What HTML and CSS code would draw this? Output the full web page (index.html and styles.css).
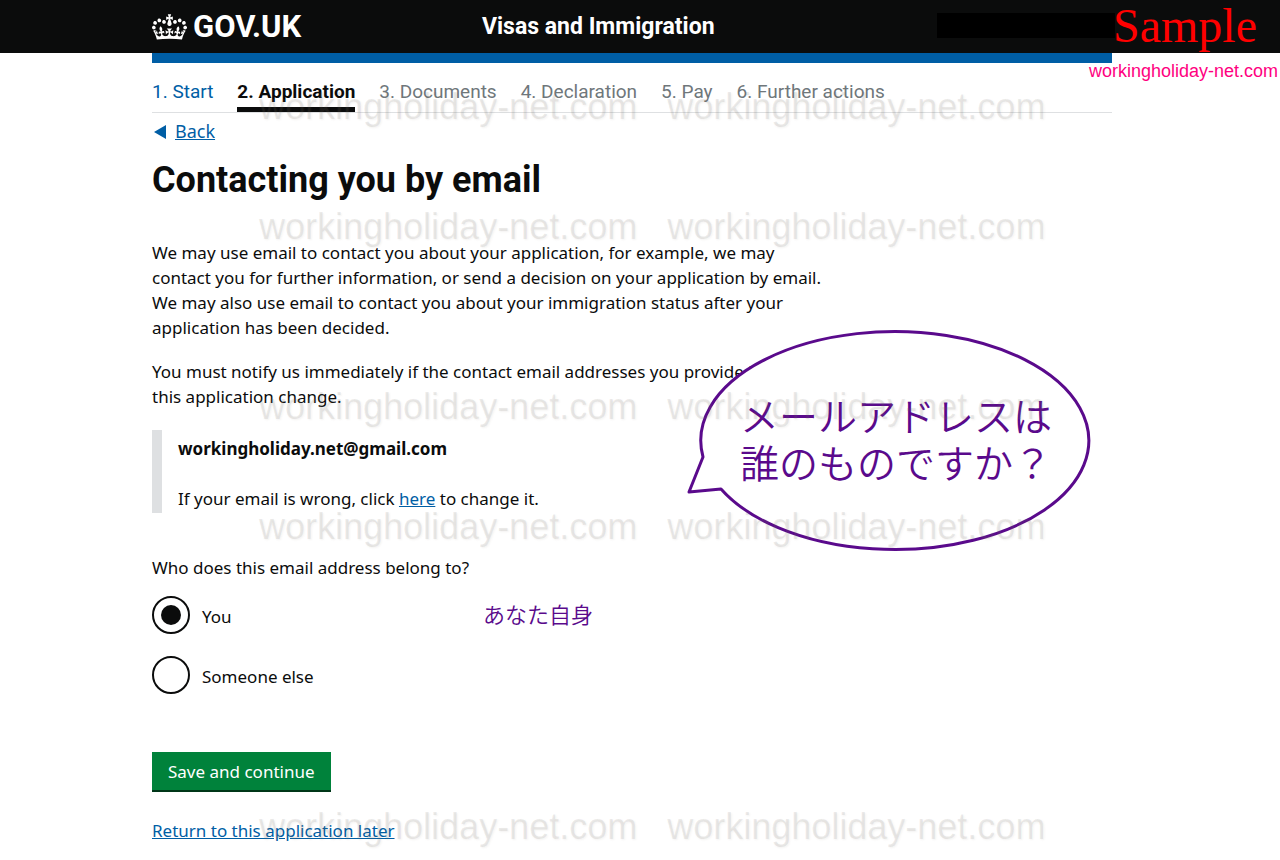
FILE: index.html
```
<!DOCTYPE html>
<html lang="en">
<head>
  <meta charset="UTF-8">
  <meta name="viewport" content="width=device-width, initial-scale=1">
  <title>Contacting you by email - Visas and Immigration</title>
  <link rel="stylesheet" href="styles.css">
</head>
<body>
  <header class="header">
    <div class="container header-inner">
      <a class="logo" href="#">
        <svg class="crown" viewBox="0 0 132 97" aria-hidden="true">
          <path fill="currentColor" fill-rule="evenodd" d="M25 30.2c3.5 1.5 7.7-.2 9.1-3.7 1.5-3.6-.2-7.8-3.9-9.2-3.6-1.4-7.6.3-9.1 3.9-1.4 3.5.3 7.5 3.9 9zM9 39.5c3.6 1.5 7.8-.2 9.2-3.7 1.5-3.6-.2-7.8-3.9-9.1-3.6-1.5-7.6.2-9.1 3.8-1.4 3.5.3 7.5 3.8 9zM4.4 57.2c3.5 1.5 7.7-.2 9.1-3.8 1.5-3.6-.2-7.7-3.9-9.1-3.5-1.5-7.6.3-9.1 3.8-1.4 3.5.3 7.6 3.9 9.1zm38.3-21.4c3.5 1.5 7.7-.2 9.1-3.8 1.5-3.6-.2-7.7-3.9-9.1-3.6-1.5-7.6.3-9.1 3.8-1.3 3.6.4 7.7 3.9 9.1zm64.4-5.6c-3.6 1.5-7.8-.2-9.1-3.7-1.5-3.6.2-7.8 3.8-9.2 3.6-1.4 7.7.3 9.2 3.9 1.3 3.5-.4 7.5-3.9 9zm15.9 9.3c-3.6 1.5-7.7-.2-9.1-3.7-1.5-3.6.2-7.8 3.7-9.1 3.6-1.5 7.7.2 9.2 3.8 1.5 3.5-.3 7.5-3.8 9zm4.7 17.7c-3.6 1.5-7.8-.2-9.2-3.8-1.5-3.6.2-7.7 3.9-9.1 3.6-1.5 7.7.3 9.2 3.8 1.3 3.5-.4 7.6-3.9 9.1zM89.3 35.8c-3.6 1.5-7.8-.2-9.2-3.8-1.4-3.6.2-7.7 3.9-9.1 3.6-1.5 7.7.3 9.2 3.8 1.4 3.6-.3 7.7-3.9 9.1zM69.7 17.7l8.9 4.7V9.3l-8.9 2.8c-.2-.3-.5-.6-.9-.9L72.4 0H59.6l3.5 11.2c-.3.3-.6.5-.9.9l-8.8-2.8v13.1l8.8-4.7c.3.3.6.7.9.9l-5 15.4v.1c-.2.8-.4 1.6-.4 2.4 0 4.1 3.1 7.5 7 8.1h.2c.3 0 .7.1 1 .1.4 0 .7 0 1-.1h.2c4-.6 7.1-4.1 7.1-8.1 0-.8-.1-1.7-.4-2.4V34l-5.1-15.4c.4-.2.7-.6 1-.9zM66 92.8c16.9 0 32.8 1.1 47.1 3.2 4-16.9 8.9-26.7 14-33.5l-9.6-3.4c1 4.9 1.1 7.2 0 10.2-1.5-1.4-3-4.3-4.2-8.7L108.6 76c2.8-2 5-3.2 7.5-3.3-4.4 9.4-10 11.9-13.6 11.2-4.3-.8-6.3-4.6-5.6-7.9 1-4.7 5.7-5.9 8-.5 4.3-8.7-3-11.4-7.6-8.8 7.1-7.2 7.9-13.5 2.1-21.1-8 6.1-8.1 12.3-4.5 20.8-4.7-5.4-12.1-2.5-9.5 6.2 3.4-5.2 7.9-2 7.2 3.1-.6 4.3-6.4 7.8-13.5 7.2-10.3-.9-10.9-8-11.2-13.8 2.5-.5 7.1 1.8 11 7.3L80.2 60c-4.1 4.4-8 5.3-12.3 5.4 1.4-4.4 8-11.6 8-11.6H55.5s6.4 7.2 7.9 11.6c-4.2-.1-8-1-12.3-5.4l1.4 16.4c3.9-5.5 8.5-7.7 10.9-7.3-.3 5.8-.9 12.8-11.1 13.8-7.2.6-12.9-2.9-13.5-7.2-.7-5 3.8-8.3 7.1-3.1 2.7-8.7-4.6-11.6-9.4-6.2 3.7-8.5 3.6-14.7-4.6-20.8-5.8 7.6-5 13.9 2.2 21.1-4.7-2.6-11.9.1-7.7 8.8 2.3-5.5 7.1-4.2 8.1.5.7 3.3-1.3 7.1-5.7 7.9-3.5.7-9-1.8-13.5-11.2 2.5.1 4.7 1.3 7.5 3.3l-4.7-15.4c-1.2 4.4-2.7 7.2-4.3 8.7-1.1-3-.9-5.3 0-10.2l-9.5 3.4c5 6.9 9.9 16.7 14 33.5 14.8-2.1 30.8-3.2 47.7-3.2z"/>
        </svg>
        <span>GOV.UK</span>
      </a>
      <a class="service-name" href="#">Visas and Immigration</a>
    </div>
    <div class="redacted"></div>
    <div class="sample">Sample</div>
    <div class="site-name">workingholiday-net.com</div>
  </header>

  <div class="page">
    <div class="container">
      <div class="blue-bar"></div>

      <nav class="steps" aria-label="Application progress">
        <a class="step step-done" href="#">1. Start</a>
        <span class="step step-current" aria-current="step">2. Application</span>
        <span class="step">3. Documents</span>
        <span class="step">4. Declaration</span>
        <span class="step">5. Pay</span>
        <span class="step">6. Further actions</span>
      </nav>

      <div class="back">
        <svg class="back-arrow" viewBox="0 0 12 14" aria-hidden="true"><path fill="currentColor" d="M12 0v14L0 7z"/></svg>
        <a href="#">Back</a>
      </div>

      <main class="content">
        <h1>Contacting you by email</h1>

        <p>We may use email to contact you about your application, for example, we may<br>
          contact you for further information, or send a decision on your application by email.<br>
          We may also use email to contact you about your immigration status after your<br>
          application has been decided.</p>
        <p>You must notify us immediately if the contact email addresses you provide in<br>
          this application change.</p>

        <div class="inset">
          <strong>workingholiday.net@gmail.com</strong>
          <span>If your email is wrong, click <a href="#">here</a> to change it.</span>
        </div>

        <form action="#">
          <fieldset>
            <legend>Who does this email address belong to?</legend>
            <div class="radio">
              <input type="radio" id="owner-you" name="owner" value="you" checked>
              <label for="owner-you">You</label>
              <span class="note" lang="ja">あなた自身</span>
            </div>
            <div class="radio">
              <input type="radio" id="owner-other" name="owner" value="other">
              <label for="owner-other">Someone else</label>
            </div>
          </fieldset>
          <button class="button" type="submit">Save and continue</button>
        </form>

        <a class="return-link" href="#">Return to this application later</a>
      </main>

      <div class="bubble" lang="ja">
        <svg class="bubble-shape" viewBox="0 0 406 224" aria-hidden="true">
          <path d="M17 127A194 109 0 1 1 35 159L3 162Z"/>
        </svg>
        <p class="bubble-text">メールアドレスは<br>誰のものですか？</p>
      </div>

      <div class="watermarks" aria-hidden="true">
        <div class="watermark mark-1"><span>workingholiday-net.com</span><span>workingholiday-net.com</span></div>
        <div class="watermark mark-2"><span>workingholiday-net.com</span><span>workingholiday-net.com</span></div>
        <div class="watermark mark-3"><span>workingholiday-net.com</span><span>workingholiday-net.com</span></div>
        <div class="watermark mark-4"><span>workingholiday-net.com</span><span>workingholiday-net.com</span></div>
        <div class="watermark mark-5"><span>workingholiday-net.com</span><span>workingholiday-net.com</span></div>
      </div>
    </div>
  </div>
</body>
</html>
```
FILE: styles.css
```
* {
  box-sizing: border-box;
}
body {
  margin: 0;
  background: #fff;
  color: #0b0c0c;
  font-family: "Noto Sans", "Noto Sans CJK JP", sans-serif;
  font-size: 17px;
  line-height: 25px;
}
a {
  color: #005ea5;
}
.header,
.page {
  padding-right: 16px;
}
.container {
  position: relative;
  max-width: 960px;
  margin: 0 auto;
}

/* header */
.header {
  position: relative;
  background: #0b0c0c;
}
.header-inner {
  display: flex;
  align-items: center;
  height: 53px;
}
.header a {
  color: #fff;
  font-family: Roboto, sans-serif;
  font-weight: 700;
  text-decoration: none;
}
.logo {
  display: flex;
  align-items: center;
  gap: 6px;
  width: 330px;
  font-size: 31px;
}
.crown {
  width: 35px;
  height: 26px;
}
.service-name {
  font-size: 23px;
}
.redacted {
  position: absolute;
  top: 13px;
  right: 165px;
  width: 178px;
  height: 25px;
  background: #000;
}
.sample {
  position: absolute;
  top: 0;
  right: 23px;
  color: #f00;
  font-family: "Liberation Serif", serif;
  font-size: 48px;
  line-height: 52px;
}
.site-name {
  position: absolute;
  top: 60px;
  right: 2px;
  color: #ff0080;
  font-family: "Liberation Sans", sans-serif;
  font-size: 18px;
  line-height: 22px;
}

/* progress */
.blue-bar {
  height: 10px;
  background: #005ea5;
}
.steps {
  display: flex;
  gap: 24px;
  height: 50px;
  padding-top: 16px;
  border-bottom: 1px solid #dee0e2;
  font-family: Roboto, sans-serif;
  font-size: 19px;
}
.step {
  height: 33px;
  color: #6f777b;
  text-decoration: none;
}
.step-done {
  color: #005ea5;
}
.step-current {
  border-bottom: 5px solid #0b0c0c;
  color: #0b0c0c;
  font-weight: 700;
}
.back {
  display: flex;
  align-items: center;
  gap: 9px;
  padding: 6px 0 0 2px;
  font-size: 18px;
}
.back-arrow {
  width: 12px;
  height: 14px;
  color: #005ea5;
}

/* content */
.content {
  padding-bottom: 20px;
}
h1 {
  margin: 16px 0 40px;
  font-family: Roboto, sans-serif;
  font-size: 36px;
  line-height: 40px;
}
p {
  margin: 0 0 19px;
}
.inset {
  display: flex;
  flex-direction: column;
  gap: 25px;
  margin: 21px 0 42px;
  padding: 6px 0 2px 16px;
  border-left: 10px solid #dee0e2;
}
fieldset {
  margin: 0;
  padding: 0;
  border: 0;
}
legend {
  padding: 0;
  margin-bottom: 16px;
}
.radio {
  display: flex;
  align-items: center;
  height: 38px;
  margin-bottom: 22px;
}
.radio input {
  display: grid;
  place-items: center;
  width: 38px;
  height: 38px;
  margin: 0 12px 0 0;
  border: 2px solid #0b0c0c;
  border-radius: 50%;
  appearance: none;
}
.radio input:checked::before {
  width: 20px;
  height: 20px;
  border-radius: 50%;
  background: #0b0c0c;
  content: "";
}
.radio label {
  width: 281px;
  padding-top: 2px;
}
.note {
  padding-bottom: 4px;
  color: #5a0a8c;
  font-family: "Noto Sans CJK JP", sans-serif;
  font-size: 22px;
  font-weight: 350;
  line-height: 22px;
}
.button {
  display: block;
  height: 40px;
  margin: 36px 0 26px;
  padding: 0 16px;
  border: 0;
  border-bottom: 2px solid #003618;
  background: #00823b;
  color: #fff;
  font: inherit;
}

/* speech bubble */
.bubble {
  position: absolute;
  top: 277px;
  left: 534px;
  width: 406px;
  height: 224px;
}
.bubble-shape {
  display: block;
  width: 406px;
  height: 224px;
  overflow: visible;
  fill: #fff;
  stroke: #5a0a8c;
  stroke-width: 3;
  stroke-linejoin: round;
}
.bubble-text {
  position: absolute;
  top: 61px;
  left: 54px;
  color: #5a0a8c;
  font-family: "Noto Sans CJK JP", sans-serif;
  font-size: 39px;
  font-weight: 350;
  line-height: 47px;
  white-space: nowrap;
}

/* watermark rows */
.watermark {
  position: absolute;
  left: 107px;
  display: flex;
  gap: 30px;
  color: rgba(110, 105, 95, 0.12);
  font-family: "Liberation Sans", sans-serif;
  font-size: 36px;
  line-height: 40px;
  text-shadow: 1px 1px 2px rgba(110, 105, 95, 0.08);
  pointer-events: none;
}
.mark-1 {
  top: 34px;
}
.mark-2 {
  top: 154px;
}
.mark-3 {
  top: 334px;
}
.mark-4 {
  top: 454px;
}
.mark-5 {
  top: 754px;
}
```
